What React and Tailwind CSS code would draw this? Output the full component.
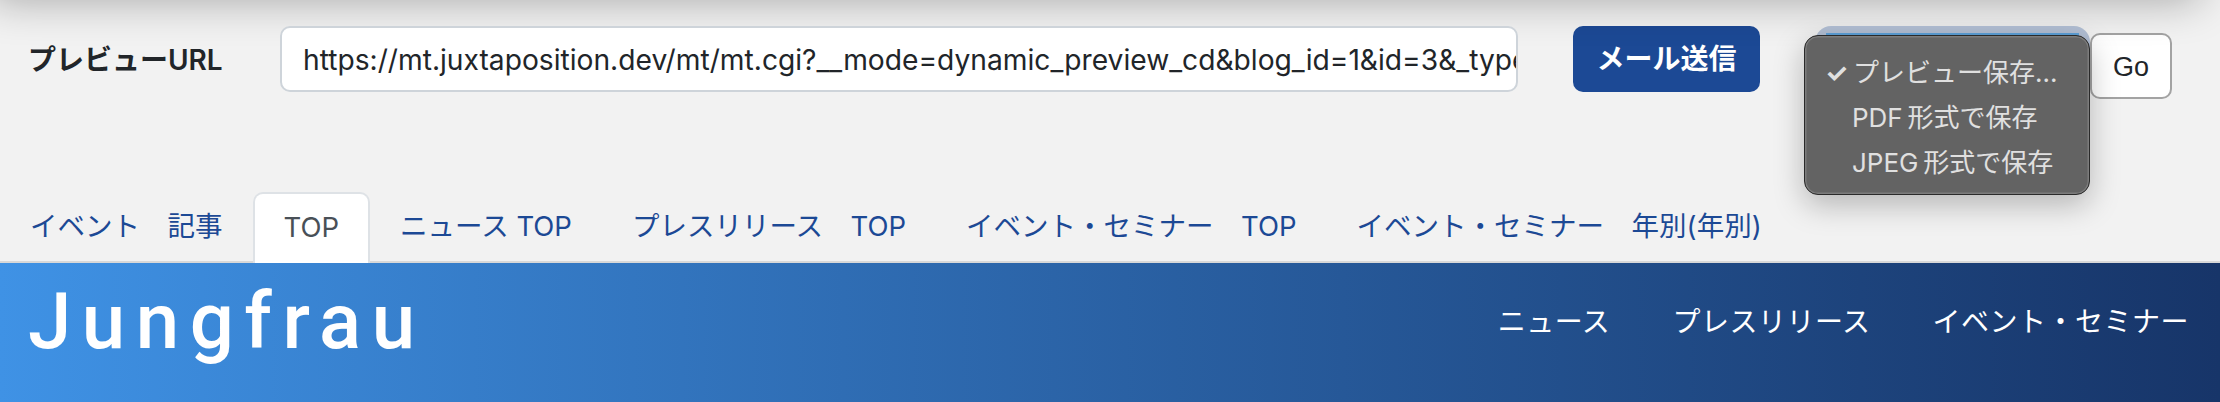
import React from 'react';

const tabs = [
    { label: 'イベント　記事' },
    { label: 'TOP', active: true },
    { label: 'ニュース TOP' },
    { label: 'プレスリリース　TOP' },
    { label: 'イベント・セミナー　TOP' },
    { label: 'イベント・セミナー　年別(年別)' },
];

const globalNav = ['ニュース', 'プレスリリース', 'イベント・セミナー'];

export default function App() {
    return (
        <div className="relative w-[2220px] h-[402px] overflow-hidden bg-[#f2f2f2] text-[#212529] font-['Inter','Noto_Sans_CJK_JP',sans-serif]">
            {/* 上からかかる影 */}
            <div className="absolute -left-[10px] right-[20px] -top-[80px] h-[80px] shadow-[0_0_44px_rgba(0,0,0,0.32)]"></div>

            {/* プレビュー操作 */}
            <div className="h-[192px] pt-[26px] pl-[28px] flex items-start">
                <label className="w-[252px] h-[66px] pt-[2px] flex items-center text-[28px] font-semibold">プレビューURL</label>
                <div className="relative w-[1238px] h-[66px] bg-white border-2 border-[#ced4da] rounded-[10px] pl-[21px] pr-[2px] pt-[2px] flex items-center overflow-hidden text-[28.2px] whitespace-nowrap">
                    https://mt.juxtaposition.dev/mt/mt.cgi?__mode=dynamic_preview_cd&amp;blog_id=1&amp;id=3&amp;_type=page
                </div>
                <button className="ml-[55px] w-[187px] h-[66px] bg-[#1c4995] rounded-[10px] text-white text-[28px] font-bold">メール送信</button>
                <div className="relative ml-[44px] w-[286px] h-[66px]">
                    <div className="ml-[11px] h-[40px] bg-[#b0bdd2] rounded-t-[16px] px-[11px] pt-[7px]">
                        <div className="h-[3px] bg-[#5c9fd6]"></div>
                    </div>
                    <div className="absolute left-0 top-[9px] w-[286px] h-[160px] bg-[#636363] border border-[#2a2a2a] rounded-[14px] shadow-[inset_0_0_0_1.5px_#7c7c7c,0_10px_30px_rgba(0,0,0,0.25)] pt-[14px] text-[#e0e0e0] text-[26px] leading-[45px]">
                        <div className="flex"><span className="w-[48px] pl-[20px] text-[26px] font-bold">✓</span>プレビュー保存...</div>
                        <div className="pl-[47px]">PDF&#8201;形式で保存</div>
                        <div className="pl-[47px]">JPEG&#8201;形式で保存</div>
                    </div>
                </div>
                <button className="mt-[7px] w-[82px] h-[66px] pt-[3px] bg-white border-2 border-[#a3a3a3] rounded-[10px] text-[27px] font-['Liberation_Sans',sans-serif]">Go</button>
            </div>

            {/* タブ */}
            <div className="h-[71px] border-b-2 border-[#d8d8d8] flex items-start text-[27.5px] leading-[40px] text-[#1c4995]">
                {tabs.map((tab, index) => (
                    <a key={index} className={tab.active
                        ? 'h-[71px] px-[29px] pt-[13px] bg-white border-2 border-b-0 border-[#dee2e6] rounded-t-[10px] text-[#495057]'
                        : 'h-[71px] px-[30px] pt-[14px] whitespace-nowrap'}>
                        {tab.label}
                    </a>
                ))}
            </div>

            {/* サイトヘッダー */}
            <header className="h-[139px] bg-gradient-to-r from-[#3f92e5] to-[#173569] flex items-start justify-between text-white">
                <div className="pl-[28px] pt-[14px] text-[78px] leading-[90px] tracking-[10.5px] font-medium font-['Roboto',sans-serif]">Jungfrau</div>
                <nav className="flex gap-[62px] pr-[31px] pt-[38px] text-[28px] tracking-[0.5px] whitespace-nowrap">
                    {globalNav.map((item) => (
                        <a key={item}>{item}</a>
                    ))}
                </nav>
            </header>
        </div>
    );
}
